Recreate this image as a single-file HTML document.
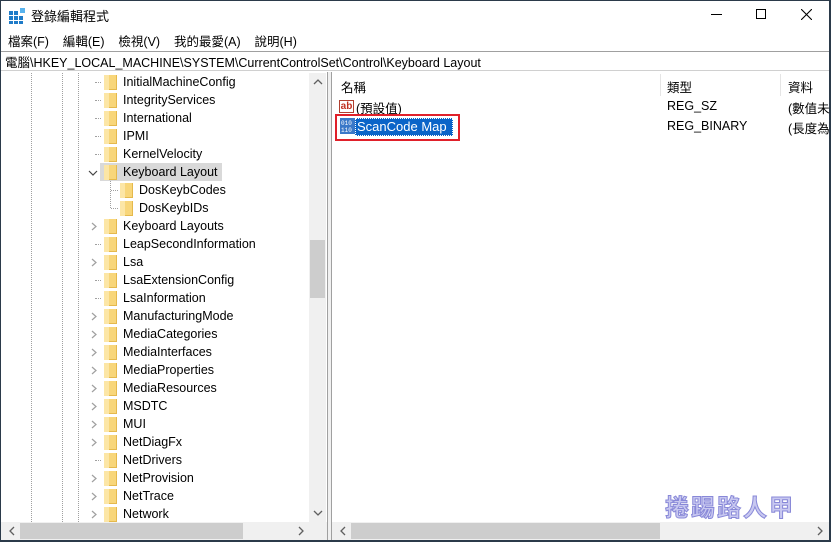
<!DOCTYPE html><html><head><meta charset="utf-8"><style>
*{margin:0;padding:0;box-sizing:border-box}
body{width:831px;height:542px;overflow:hidden;background:#fff;font-family:"Liberation Sans","Noto Sans CJK TC",sans-serif;font-size:12.5px;color:#000;position:relative}
.abs{position:absolute}
.row{position:absolute;height:18px;line-height:18px;white-space:nowrap}
.fold{position:absolute;width:13px;height:15px;background:#f8d67a;border-right:1px solid #e5b94c;border-bottom:1px solid #e5b94c}
.fold:after{content:"";position:absolute;left:0;top:0;width:5px;height:15px;background:#fce6a6}
.dv{position:absolute;border-left:1px dotted #a0a0a0}
.dh{position:absolute;border-top:1px dotted #a0a0a0;width:7px}
</style></head><body>
<div class="abs" style="left:0;top:0;width:831px;height:1px;background:#2b3a4a"></div>
<div class="abs" style="left:829px;top:0;width:2px;height:542px;background:#2b3a4a"></div>
<div class="abs" style="left:0;top:0;width:1px;height:542px;background:#2b3a4a"></div>
<div class="abs" style="left:0;top:540px;width:831px;height:2px;background:#2b3a4a"></div>
<svg class="abs" style="left:9px;top:8px" width="16" height="16"><rect x="0" y="3" width="4" height="4" fill="#1e7bc8"/><rect x="5" y="3" width="4" height="4" fill="#1e7bc8"/><rect x="0" y="8" width="4" height="4" fill="#1e7bc8"/><rect x="5" y="8" width="4" height="4" fill="#1e7bc8"/><rect x="10" y="8" width="4" height="4" fill="#1e7bc8"/><rect x="0" y="13" width="4" height="3" fill="#1e7bc8"/><rect x="5" y="13" width="4" height="3" fill="#1e7bc8"/><rect x="10" y="13" width="4" height="3" fill="#1e7bc8"/><rect x="11" y="0" width="5" height="5" fill="#58b3ee"/></svg>
<div class="abs" style="left:31px;top:6px;font-size:13px">登錄編輯程式</div>
<div class="abs" style="left:711px;top:14px;width:11px;height:1px;background:#000"></div>
<div class="abs" style="left:756px;top:9px;width:10px;height:10px;border:1px solid #000"></div>
<svg class="abs" style="left:801px;top:9px" width="11" height="11"><path d="M0 0L11 11M11 0L0 11" stroke="#000" stroke-width="1.1"/></svg>
<div class="abs" style="left:8px;top:31px">檔案(F)&nbsp;&nbsp;&nbsp;&nbsp;編輯(E)&nbsp;&nbsp;&nbsp;&nbsp;檢視(V)&nbsp;&nbsp;&nbsp;&nbsp;我的最愛(A)&nbsp;&nbsp;&nbsp;&nbsp;說明(H)</div>
<div class="abs" style="left:1px;top:51px;width:828px;height:20px;border-top:1px solid #a0a0a0;border-bottom:1px solid #d0d0d0"></div>
<div class="abs" style="left:5px;top:52px">電腦\HKEY_LOCAL_MACHINE\SYSTEM\CurrentControlSet\Control\Keyboard Layout</div>
<div class="dv" style="left:31px;top:73px;height:449px"></div>
<div class="dv" style="left:62px;top:73px;height:449px"></div>
<div class="dv" style="left:78px;top:73px;height:449px"></div>
<div class="abs" style="left:100px;top:163px;width:122px;height:18px;background:#d9d9d9"></div>
<div class="dv" style="left:110px;top:181px;height:27px"></div>
<div class="dh" style="left:111px;top:190px"></div>
<div class="dh" style="left:111px;top:208px"></div>
<div id="tree"></div>
<div class="abs" style="left:309px;top:73px;width:17px;height:449px;background:#f0f0f0"></div>
<div class="abs" style="left:310px;top:240px;width:15px;height:58px;background:#cdcdcd"></div>
<svg class="abs" style="left:313px;top:79px" width="10" height="6"><path d="M1 5L5 1L9 5" stroke="#606060" fill="none" stroke-width="1.3"/></svg>
<svg class="abs" style="left:313px;top:510px" width="10" height="6"><path d="M1 1L5 5L9 1" stroke="#606060" fill="none" stroke-width="1.3"/></svg>
<div class="abs" style="left:327px;top:72px;width:5px;height:468px;background:#f0f0f0;border-left:1px solid #a0a0a0;border-right:1px solid #a0a0a0"></div>
<div class="abs" style="left:1px;top:522px;width:326px;height:18px;background:#f0f0f0"></div>
<div class="abs" style="left:20px;top:523px;width:223px;height:16px;background:#cdcdcd"></div>
<svg class="abs" style="left:9px;top:526px" width="6" height="10"><path d="M5 1L1 5L5 9" stroke="#606060" fill="none" stroke-width="1.3"/></svg>
<svg class="abs" style="left:298px;top:526px" width="6" height="10"><path d="M1 1L5 5L1 9" stroke="#606060" fill="none" stroke-width="1.3"/></svg>
<div class="abs" style="left:341px;top:77px">名稱</div>
<div class="abs" style="left:660px;top:74px;width:1px;height:22px;background:#e5e5e5"></div>
<div class="abs" style="left:780px;top:74px;width:1px;height:22px;background:#e5e5e5"></div>
<div class="abs" style="left:667px;top:77px">類型</div>
<div class="abs" style="left:788px;top:77px">資料</div>
<div class="abs" style="left:339px;top:100px;width:15px;height:13px;border:1px solid #b04030;color:#c03020;font-size:10px;line-height:11px;font-weight:bold;text-align:center">ab</div>
<div class="abs" style="left:356px;top:98px">(預設值)</div>
<div class="abs" style="left:667px;top:99px">REG_SZ</div>
<div class="abs" style="left:788px;top:98px">(數值未</div>
<div class="abs" style="left:335px;top:114px;width:125px;height:27px;border:2px solid #e0202a"></div>
<svg class="abs" style="left:340px;top:118px" width="15" height="16"><rect width="15" height="16" fill="#3a78c8"/><text x="1" y="7" font-size="6" fill="#fff" font-family="Liberation Mono">010</text><text x="1" y="14" font-size="6" fill="#fff" font-family="Liberation Mono">110</text></svg>
<div class="abs" style="left:355px;top:118px;width:98px;height:18px;background:#0a64c8;border:1px dotted #fff;color:#fff;font-size:13px;line-height:16px;padding-left:1px">ScanCode Map</div>
<div class="abs" style="left:667px;top:119px">REG_BINARY</div>
<div class="abs" style="left:788px;top:118px">(長度為</div>
<div class="abs" style="left:665px;top:488px;font-size:24px;font-weight:bold;color:#c8c8f0;font-family:'Noto Sans CJK TC',sans-serif;letter-spacing:2px;-webkit-text-stroke:1px #8888d8">捲踢路人甲</div>
<div class="abs" style="left:332px;top:522px;width:497px;height:18px;background:#f0f0f0"></div>
<div class="abs" style="left:351px;top:523px;width:309px;height:16px;background:#cdcdcd"></div>
<svg class="abs" style="left:340px;top:526px" width="6" height="10"><path d="M5 1L1 5L5 9" stroke="#606060" fill="none" stroke-width="1.3"/></svg>
<svg class="abs" style="left:817px;top:526px" width="6" height="10"><path d="M1 1L5 5L1 9" stroke="#606060" fill="none" stroke-width="1.3"/></svg>
<script>
var items=[["InitialMachineConfig",0],["IntegrityServices",0],["International",0],["IPMI",0],["KernelVelocity",0],["Keyboard Layout",2],["DosKeybCodes",3],["DosKeybIDs",3],["Keyboard Layouts",1],["LeapSecondInformation",0],["Lsa",1],["LsaExtensionConfig",0],["LsaInformation",0],["ManufacturingMode",1],["MediaCategories",1],["MediaInterfaces",1],["MediaProperties",1],["MediaResources",1],["MSDTC",1],["MUI",1],["NetDiagFx",1],["NetDrivers",0],["NetProvision",1],["NetTrace",1],["Network",1]];
var h="";items.forEach(function(it,i){var t=73+i*18;var x=it[1]==3?120:104;
if(it[1]==1)h+='<svg class="abs" style="left:91px;top:'+(t+5)+'px" width="6" height="9"><path d="M1 1L5 4.5L1 8" stroke="#a0a0a0" fill="none" stroke-width="1.2"/></svg>';
if(it[1]==2)h+='<svg class="abs" style="left:88px;top:'+(t+7)+'px" width="10" height="6"><path d="M1 1L5 5L9 1" stroke="#444" fill="none" stroke-width="1.2"/></svg>';
if(it[1]==0)h+='<div class="dh" style="left:95px;top:'+(t+9)+'px;width:6px"></div>';
h+='<div class="fold" style="left:'+x+'px;top:'+(t+2)+'px"></div><div class="row" style="left:'+(x+19)+'px;top:'+t+'px">'+it[0]+'</div>';});
document.getElementById("tree").innerHTML=h;
</script>
</body></html>
